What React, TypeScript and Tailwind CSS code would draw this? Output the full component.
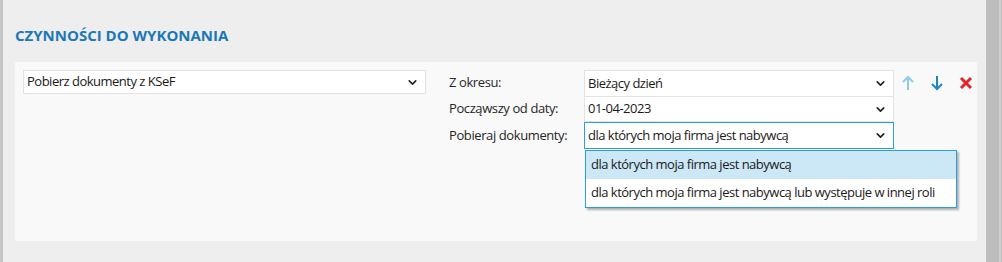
import { ChevronDown } from "lucide-react";

const font = { fontFamily: "'Open Sans', 'Noto Sans', sans-serif" };

const Chevron = () => <ChevronDown className="h-[13px] w-[13px] text-[#222]" strokeWidth={3} />;

const Select = ({ value, className = "" }: { value: string; className?: string }) => (
  <div className={`flex items-center justify-between bg-white pl-[3px] pr-[6px] text-[13px] tracking-[-0.5px] text-[#1a1a1a] ${className}`}>
    <span className="whitespace-nowrap">{value}</span>
    <Chevron />
  </div>
);

const ArrowUp = ({ color }: { color: string }) => (
  <svg width="14" height="16" viewBox="0 0 14 16" fill="none" stroke={color} strokeWidth="2">
    <path d="M7 2 V15 M2 7 L7 2 L12 7" />
  </svg>
);

const ArrowDown = ({ color }: { color: string }) => (
  <svg width="14" height="16" viewBox="0 0 14 16" fill="none" stroke={color} strokeWidth="2">
    <path d="M7 1 V14 M2 9 L7 14 L12 9" />
  </svg>
);

const Cross = () => (
  <svg width="14" height="14" viewBox="0 0 14 14" fill="none" stroke="#e4222a" strokeWidth="3">
    <path d="M2 2 L12 12 M12 2 L2 12" />
  </svg>
);

export default function App() {
  const options = [
    "dla których moja firma jest nabywcą",
    "dla których moja firma jest nabywcą lub występuje w innej roli",
  ];

  return (
    <div className="flex h-[262px] w-[1002px] bg-[#eeeeee]" style={font}>
      <div className="w-[3px] bg-[#c6c6c6]" />
      <div className="flex flex-1 flex-col pl-[12px] pr-[9px]">
        <h2 className="pt-[25px] text-[15px] font-bold leading-[21px] text-[#1a78b6]">CZYNNOŚCI DO WYKONANIA</h2>

        {/* Panel */}
        <div className="mt-[16px] flex h-[179px] bg-[#f9f9f9] pl-[8px] pt-[8px]">
          <Select value="Pobierz dokumenty z KSeF" className="h-[24px] w-[403px] border border-[#e3e3e3]" />

          <div className="ml-[23px] grid grid-cols-[135px_310px] grid-rows-[26px_26px_27px] text-[13px] tracking-[-0.4px] text-[#262626]">
            <div className="flex items-center">Z okresu:</div>
            <Select value="Bieżący dzień" className="border border-b-0 border-[#e3e3e3]" />
            <div className="flex items-center">Począwszy od daty:</div>
            <Select value="01-04-2023" className="border border-[#e3e3e3]" />
            <div className="flex items-center">Pobieraj dokumenty:</div>
            <div className="relative">
              <Select value="dla których moja firma jest nabywcą" className="h-[27px] border border-[#2a9fdc]" />
              {/* open list */}
              <div className="absolute left-[1px] top-[28px] z-10 w-[372px] border border-[#2a9fdc] bg-white shadow-[2px_2px_2px_rgba(0,0,0,0.3)]">
                {options.map((o, i) => (
                  <div
                    key={o}
                    className={`flex h-[28px] items-center whitespace-nowrap pl-[5px] text-[13px] tracking-[-0.5px] text-[#1a1a1a] ${i === 0 ? "bg-[#cce8f6]" : ""}`}
                  >
                    {o}
                  </div>
                ))}
              </div>
            </div>
          </div>

          <div className="ml-[7px] flex h-[26px] items-center gap-[15px]">
            <ArrowUp color="#8ccbe9" />
            <ArrowDown color="#1c86c2" />
            <Cross />
          </div>
        </div>
      </div>
      <div className="flex w-[16px] bg-[#bdbdbd]">
        <div className="ml-auto mr-[1px] w-[2px] bg-[#d0d0d0]" />
      </div>
    </div>
  );
}
